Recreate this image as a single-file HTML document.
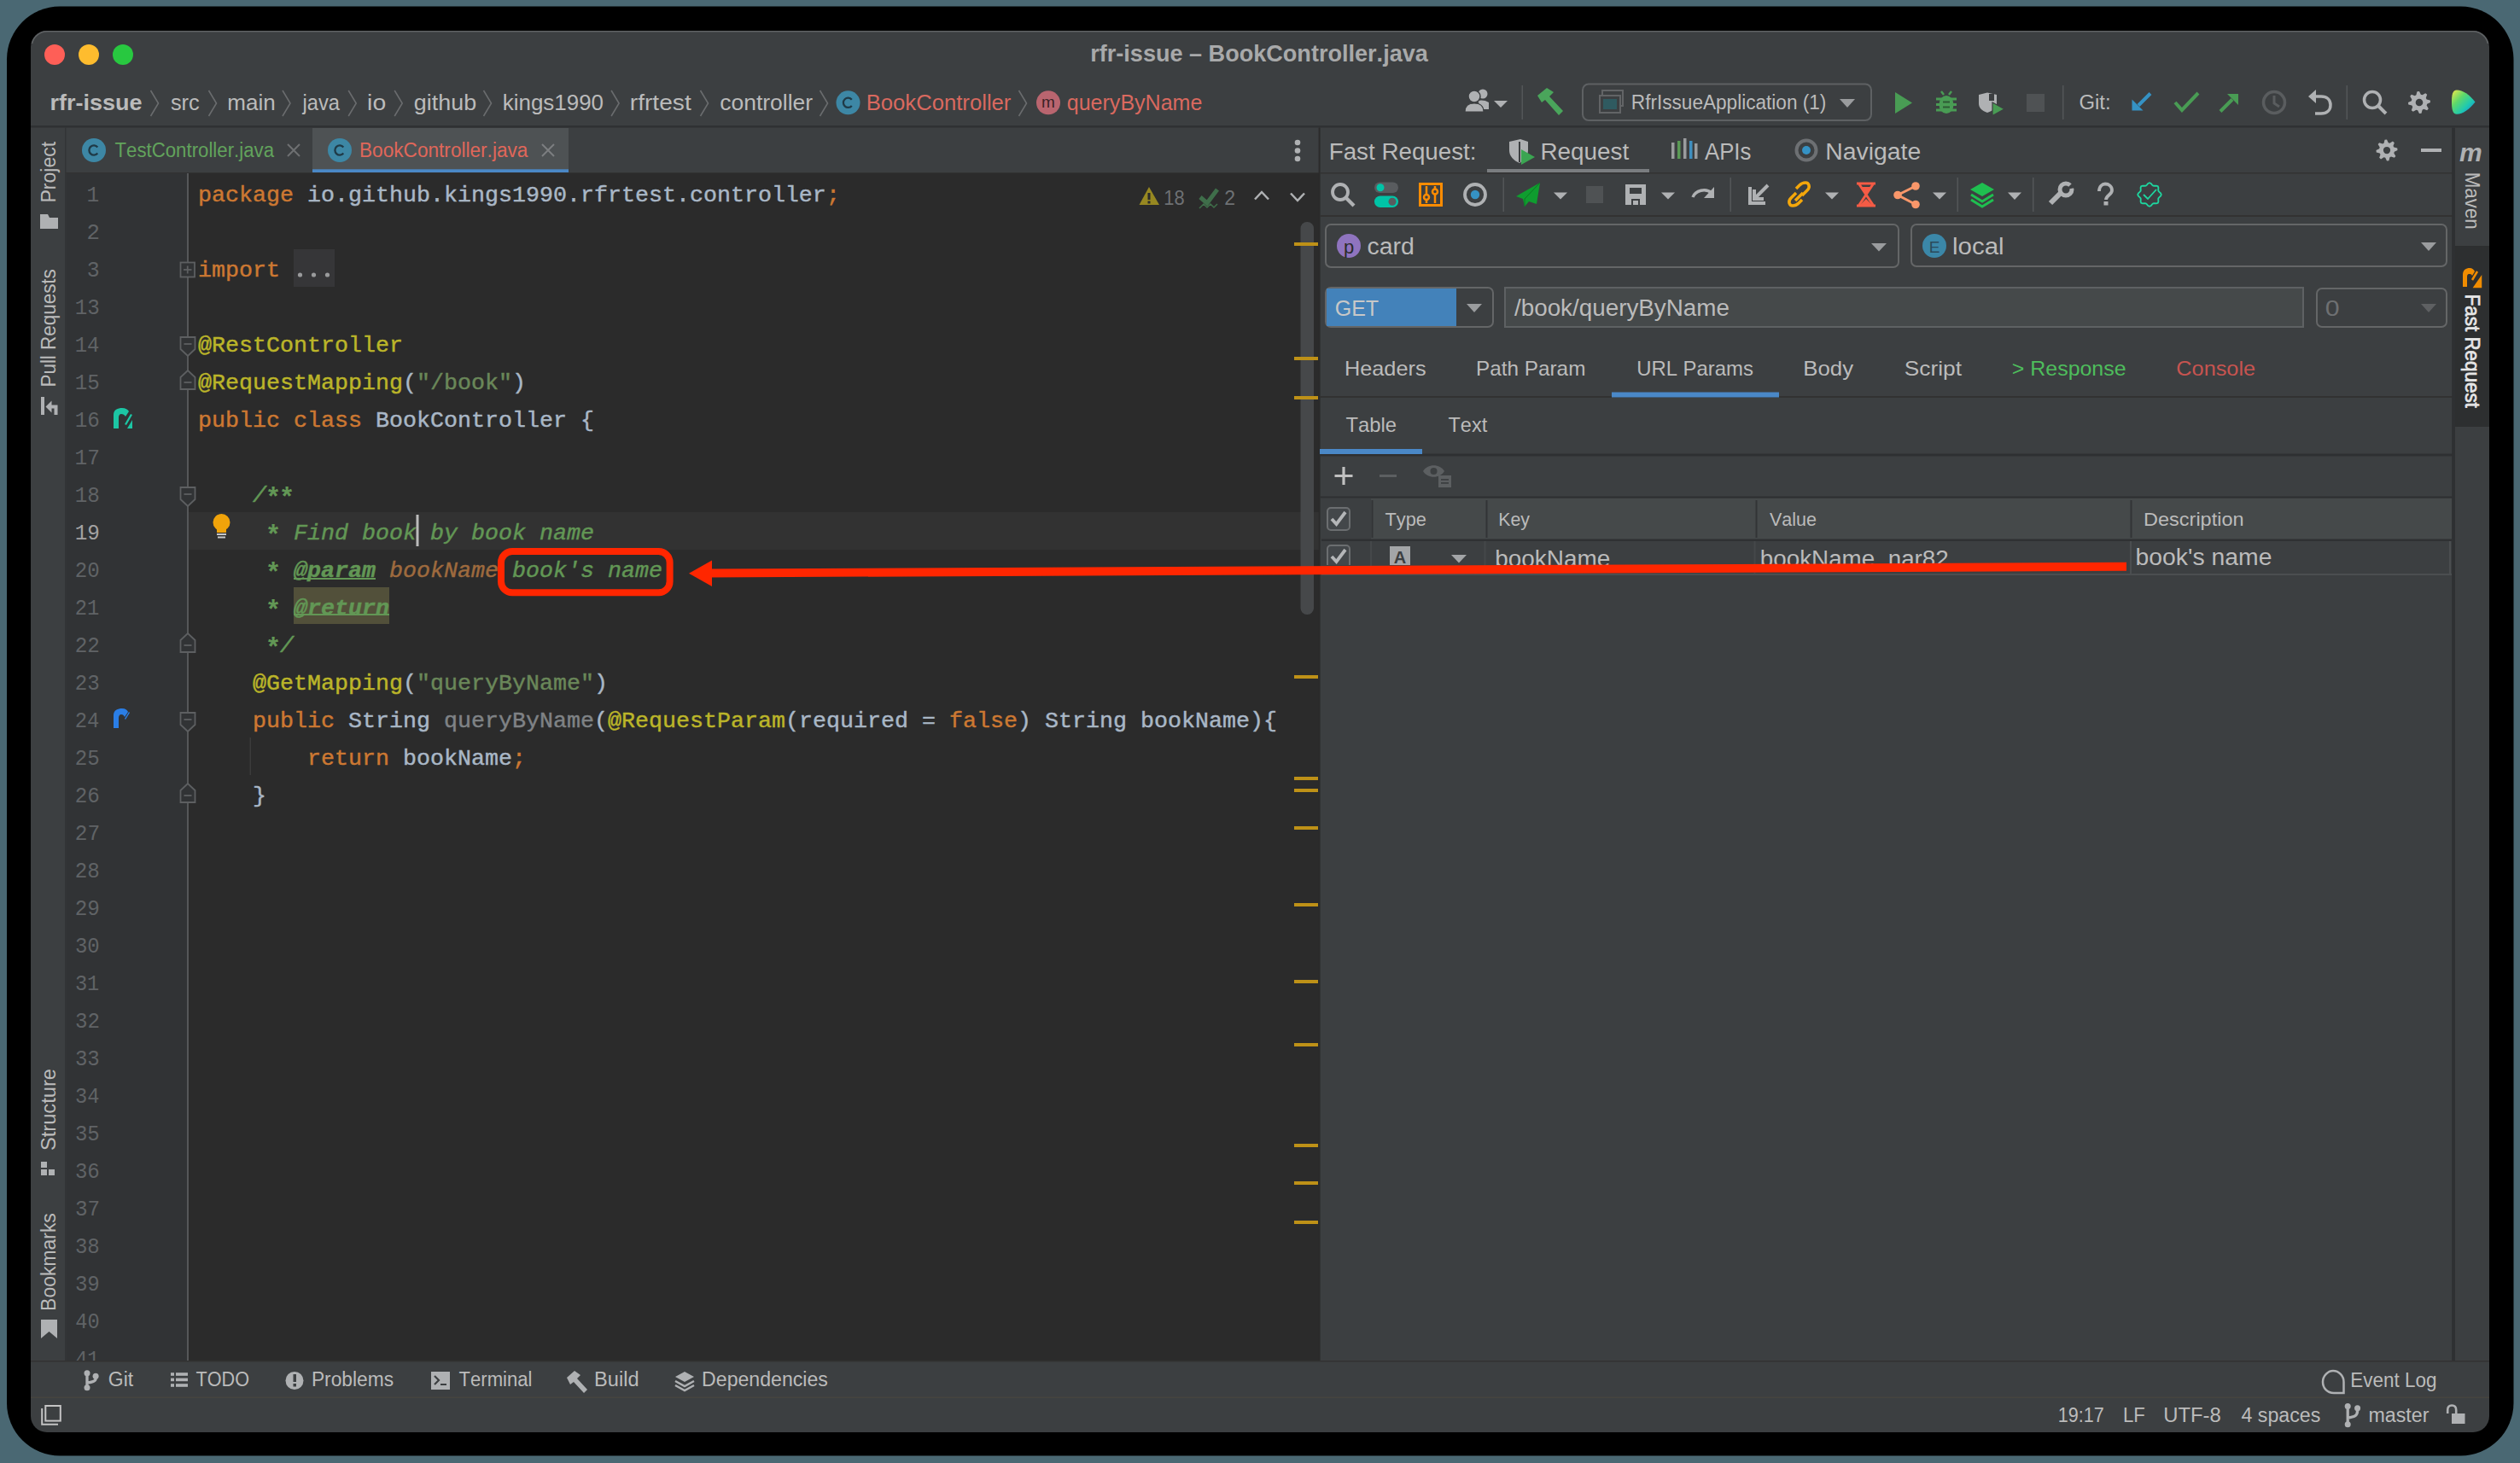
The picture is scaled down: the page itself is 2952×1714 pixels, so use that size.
<!DOCTYPE html>
<html><head><meta charset="utf-8"><title>rfr-issue – BookController.java</title>
<style>html,body{margin:0;padding:0;background:#4a6873;overflow:hidden} svg{display:block} text{font-kerning:none}</style>
</head><body>
<svg width="2952" height="1714" viewBox="0 0 2952 1714"><rect x="0" y="0" width="2952" height="1714" fill="#4a6873" />
<rect x="8" y="7.5" width="2936.5" height="1698" fill="#000000" rx="62" />
<rect x="36" y="36" width="2880" height="1642" fill="#3c3f41" rx="19" />
<path d="M 37.5 51 A 18.2 18.2 0 0 1 55 36.8 L 2897 36.8 A 18.2 18.2 0 0 1 2914.5 51" fill="none" stroke="#5f6264" stroke-width="1.6" />
<circle cx="64" cy="64" r="12" fill="#fe5f57" />
<circle cx="104" cy="64" r="12" fill="#febc2e" />
<circle cx="144" cy="64" r="12" fill="#28c840" />
<text x="1277.22" y="72.4" font-family="&quot;Liberation Sans&quot;, sans-serif" font-size="27" font-weight="bold" fill="#a8a9aa" textLength="395.61" lengthAdjust="spacingAndGlyphs" >rfr-issue – BookController.java</text>
<text x="58.52" y="128.6" font-family="&quot;Liberation Sans&quot;, sans-serif" font-size="26" font-weight="bold" fill="#bbbbbb" textLength="108.10" lengthAdjust="spacingAndGlyphs" >rfr-issue</text>
<text x="199.89" y="128.6" font-family="&quot;Liberation Sans&quot;, sans-serif" font-size="26" font-weight="normal" fill="#bbbbbb" textLength="33.77" lengthAdjust="spacingAndGlyphs" >src</text>
<text x="266.27" y="128.6" font-family="&quot;Liberation Sans&quot;, sans-serif" font-size="26" font-weight="normal" fill="#bbbbbb" textLength="56.42" lengthAdjust="spacingAndGlyphs" >main</text>
<text x="354.58" y="128.6" font-family="&quot;Liberation Sans&quot;, sans-serif" font-size="26" font-weight="normal" fill="#bbbbbb" textLength="43.42" lengthAdjust="spacingAndGlyphs" >java</text>
<text x="430.10" y="128.6" font-family="&quot;Liberation Sans&quot;, sans-serif" font-size="26" font-weight="normal" fill="#bbbbbb" textLength="22.09" lengthAdjust="spacingAndGlyphs" >io</text>
<text x="484.87" y="128.6" font-family="&quot;Liberation Sans&quot;, sans-serif" font-size="26" font-weight="normal" fill="#bbbbbb" textLength="73.26" lengthAdjust="spacingAndGlyphs" >github</text>
<text x="588.75" y="128.6" font-family="&quot;Liberation Sans&quot;, sans-serif" font-size="26" font-weight="normal" fill="#bbbbbb" textLength="118.26" lengthAdjust="spacingAndGlyphs" >kings1990</text>
<text x="737.83" y="128.6" font-family="&quot;Liberation Sans&quot;, sans-serif" font-size="26" font-weight="normal" fill="#bbbbbb" textLength="71.87" lengthAdjust="spacingAndGlyphs" >rfrtest</text>
<text x="843.28" y="128.6" font-family="&quot;Liberation Sans&quot;, sans-serif" font-size="26" font-weight="normal" fill="#bbbbbb" textLength="108.86" lengthAdjust="spacingAndGlyphs" >controller</text>
<text x="1014.69" y="128.6" font-family="&quot;Liberation Sans&quot;, sans-serif" font-size="26" font-weight="normal" fill="#d9695f" textLength="169.73" lengthAdjust="spacingAndGlyphs" >BookController</text>
<text x="1249.75" y="128.6" font-family="&quot;Liberation Sans&quot;, sans-serif" font-size="26" font-weight="normal" fill="#d9695f" textLength="158.66" lengthAdjust="spacingAndGlyphs" >queryByName</text>
<path d="M 176.5 106 L 185.5 121 L 176.5 136" fill="none" stroke="#6a6c6e" stroke-width="1.6" />
<path d="M 244.5 106 L 253.5 121 L 244.5 136" fill="none" stroke="#6a6c6e" stroke-width="1.6" />
<path d="M 331.0 106 L 340.0 121 L 331.0 136" fill="none" stroke="#6a6c6e" stroke-width="1.6" />
<path d="M 408.2 106 L 417.2 121 L 408.2 136" fill="none" stroke="#6a6c6e" stroke-width="1.6" />
<path d="M 462.2 106 L 471.2 121 L 462.2 136" fill="none" stroke="#6a6c6e" stroke-width="1.6" />
<path d="M 566.5 106 L 575.5 121 L 566.5 136" fill="none" stroke="#6a6c6e" stroke-width="1.6" />
<path d="M 716.1 106 L 725.1 121 L 716.1 136" fill="none" stroke="#6a6c6e" stroke-width="1.6" />
<path d="M 820.5 106 L 829.5 121 L 820.5 136" fill="none" stroke="#6a6c6e" stroke-width="1.6" />
<path d="M 960.5 106 L 969.5 121 L 960.5 136" fill="none" stroke="#6a6c6e" stroke-width="1.6" />
<path d="M 1193.5 106 L 1202.5 121 L 1193.5 136" fill="none" stroke="#6a6c6e" stroke-width="1.6" />
<circle cx="993.5" cy="120.3" r="14" fill="#3d87a5" />
<path d="M 997.79 116.70 A 5.6 5.6 0 1 0 997.79 123.90" fill="none" stroke="#1f3a47" stroke-width="2.3" />
<circle cx="1228" cy="120.3" r="14" fill="#b9656f" />
<text x="1228" y="126" font-family="&quot;Liberation Sans&quot;, sans-serif" font-size="19" font-weight="normal" font-style="normal" fill="#3b2226" xml:space="preserve" text-anchor="middle">m</text>
<rect x="36" y="147" width="2880" height="2.5" fill="#2f3133" />
<circle cx="1737" cy="110" r="5.5" fill="#afb1b3" />
<path d="M 1731 118 C 1734 117 1740 117 1744 120 L 1744 128 L 1736 128 Z" fill="#afb1b3" />
<circle cx="1727" cy="113" r="7" fill="#afb1b3" stroke="#3c3f41" stroke-width="1.5"/>
<path d="M 1716 131 C 1716 124 1720 121 1727 121 C 1734 121 1738 124 1738 131 Z" fill="#afb1b3" stroke="#3c3f41" stroke-width="1.2"/>
<path d="M 1750 118 L 1766 118 L 1758 126 Z" fill="#afb1b3" />
<rect x="1782.5" y="100" width="1.5" height="40" fill="#535658" />
<path d="M 1801 112 L 1812 103 L 1820 108 L 1815 113 L 1831 130 L 1826 135 L 1810 117 L 1806 120 Z" fill="#4aa55b" />
<rect x="1854" y="98.5" width="338" height="42.5" fill="none" rx="7" stroke="#5e6163" stroke-width="2"/>
<rect x="1877" y="106" width="24" height="18" fill="none" stroke="#626466" stroke-width="2"/>
<rect x="1874" y="112" width="24" height="20" fill="#3c3f41" stroke="#626466" stroke-width="2"/>
<rect x="1878" y="116" width="16" height="12" fill="#2f5a60" />
<text x="1910.85" y="127.7" font-family="&quot;Liberation Sans&quot;, sans-serif" font-size="23" font-weight="normal" fill="#bbbbbb" textLength="228.55" lengthAdjust="spacingAndGlyphs" >RfrIssueApplication (1)</text>
<path d="M 2155 116 L 2173 116 L 2164 126 Z" fill="#9a9c9e" />
<path d="M 2220 108 L 2240 120.5 L 2220 133 Z" fill="#499c54" />
<ellipse cx="2280" cy="122.5" rx="8.5" ry="10.5" fill="#499c54"/>
<path d="M 2274 107 L 2277 111 M 2286 107 L 2283 111" fill="none" stroke="#499c54" stroke-width="2.4" />
<line x1="2268" y1="116" x2="2292" y2="116" stroke="#499c54" stroke-width="3" />
<line x1="2268" y1="122.5" x2="2292" y2="122.5" stroke="#499c54" stroke-width="3" />
<line x1="2268" y1="129" x2="2292" y2="129" stroke="#499c54" stroke-width="3" />
<rect x="2276" y="118.5" width="8" height="2" fill="#2e5a35" />
<rect x="2276" y="124.5" width="8" height="2" fill="#2e5a35" />
<path d="M 2318 111 L 2328 108.5 L 2339 111 L 2339 121 C 2339 126 2335 129.5 2328 132 C 2321 129.5 2318 126 2318 121 Z" fill="#afb1b3" />
<path d="M 2330 110 L 2336 110 L 2336 118 L 2330 118 Z" fill="#3c3f41" />
<path d="M 2334 120 L 2348 127.7 L 2334 135.5 Z" fill="#499c54" stroke="#3c3f41" stroke-width="1.2"/>
<rect x="2374" y="110" width="21" height="21" fill="#4f5254" />
<rect x="2416" y="100" width="1.5" height="40" fill="#535658" />
<text x="2435.50" y="128" font-family="&quot;Liberation Sans&quot;, sans-serif" font-size="23" font-weight="normal" fill="#bbbbbb" textLength="37.07" lengthAdjust="spacingAndGlyphs" >Git:</text>
<path d="M 2519 109.5 L 2505 123.5" fill="none" stroke="#3592c4" stroke-width="4" />
<path d="M 2497.5 129.5 L 2497.5 116.5 L 2510.5 129.5 Z" fill="#3592c4" />
<path d="M 2548 120 L 2556 129 L 2575 109" fill="none" stroke="#499c54" stroke-width="4" />
<path d="M 2601 130.5 L 2615 116.5" fill="none" stroke="#499c54" stroke-width="4" />
<path d="M 2622 110 L 2622 123 L 2609 110 Z" fill="#499c54" />
<circle cx="2664" cy="120" r="12.5" fill="none" stroke="#5a5d5f" stroke-width="3.5"/>
<path d="M 2664 112 L 2664 121 L 2670 125" fill="none" stroke="#5a5d5f" stroke-width="3" />
<path d="M 2710 113 L 2719 113 C 2726 113 2730 117 2730 123 C 2730 129 2726 133 2719 133 L 2712 133" fill="none" stroke="#afb1b3" stroke-width="3.5" />
<path d="M 2704 113 L 2713 105 L 2713 121 Z" fill="#afb1b3" />
<rect x="2748.5" y="100" width="1.5" height="40" fill="#535658" />
<circle cx="2779" cy="117" r="9.5" fill="none" stroke="#afb1b3" stroke-width="3.5"/>
<line x1="2786" y1="124" x2="2795" y2="133" stroke="#afb1b3" stroke-width="4" />
<path d="M 2846.75 117.46 L 2847.00 120.00 L 2843.18 121.83 L 2842.65 123.58 L 2844.81 127.22 L 2843.19 129.19 L 2839.20 127.78 L 2837.58 128.65 L 2836.54 132.75 L 2834.00 133.00 L 2832.17 129.18 L 2830.42 128.65 L 2826.78 130.81 L 2824.81 129.19 L 2826.22 125.20 L 2825.35 123.58 L 2821.25 122.54 L 2821.00 120.00 L 2824.82 118.17 L 2825.35 116.42 L 2823.19 112.78 L 2824.81 110.81 L 2828.80 112.22 L 2830.42 111.35 L 2831.46 107.25 L 2834.00 107.00 L 2835.83 110.82 L 2837.58 111.35 L 2841.22 109.19 L 2843.19 110.81 L 2841.78 114.80 L 2842.65 116.42 Z" fill="#afb1b3" />
<circle cx="2834" cy="120" r="4.29" fill="#3c3f41" />
<defs><linearGradient id="jbg" x1="0" y1="0" x2="1" y2="1"><stop offset="0" stop-color="#f4e84a"/><stop offset="0.35" stop-color="#5fd86a"/><stop offset="0.65" stop-color="#1fc9b0"/><stop offset="1" stop-color="#1778e6"/></linearGradient></defs>
<path d="M 2878 105.5 C 2885 105.5 2893 111 2899.5 119.5 C 2893 128 2885 133.8 2878 133.8 C 2873 133.8 2872 128 2872 119.5 C 2872 111 2873 105.5 2878 105.5 Z" fill="url(#jbg)" />
<rect x="76" y="149.5" width="1.5" height="1445" fill="#323436" />
<text transform="rotate(-90)" x="-237.59" y="64.5" font-family="&quot;Liberation Sans&quot;, sans-serif" font-size="23" fill="#bbbbbb" textLength="71.76" lengthAdjust="spacingAndGlyphs">Project</text>
<path d="M 47 251 L 56 251 L 58 255 L 68 255 L 68 268 L 47 268 Z" fill="#afb1b3" />
<text transform="rotate(-90)" x="-453.54" y="64.5" font-family="&quot;Liberation Sans&quot;, sans-serif" font-size="23" fill="#bbbbbb" textLength="138.35" lengthAdjust="spacingAndGlyphs">Pull Requests</text>
<rect x="48" y="465" width="4" height="21" fill="#afb1b3" />
<path d="M 65.5 486 L 65.5 476.5 L 58 476.5" fill="none" stroke="#afb1b3" stroke-width="4" />
<path d="M 53.5 476.5 L 60.5 469.5 L 60.5 483.5 Z" fill="#afb1b3" />
<text transform="rotate(-90)" x="-1348.08" y="64.5" font-family="&quot;Liberation Sans&quot;, sans-serif" font-size="23" fill="#bbbbbb" textLength="96.13" lengthAdjust="spacingAndGlyphs">Structure</text>
<rect x="48" y="1361" width="7" height="7" fill="#afb1b3" />
<rect x="57" y="1370" width="7" height="7" fill="#afb1b3" />
<rect x="48" y="1370" width="7" height="7" fill="#afb1b3" />
<text transform="rotate(-90)" x="-1535.88" y="64.5" font-family="&quot;Liberation Sans&quot;, sans-serif" font-size="23" fill="#bbbbbb" textLength="114.71" lengthAdjust="spacingAndGlyphs">Bookmarks</text>
<path d="M 48 1546 L 67 1546 L 67 1568 L 57.5 1560 L 48 1568 Z" fill="#afb1b3" />
<rect x="366" y="150" width="300" height="53" fill="#4e5254" />
<rect x="366" y="198.3" width="300" height="5.2" fill="#4a88c7" />
<circle cx="110" cy="176" r="14" fill="#3d87a5" />
<path d="M 114.29 172.40 A 5.6 5.6 0 1 0 114.29 179.60" fill="none" stroke="#1f3a47" stroke-width="2.3" />
<text x="134.50" y="184" font-family="&quot;Liberation Sans&quot;, sans-serif" font-size="23" font-weight="normal" fill="#62a35c" textLength="186.50" lengthAdjust="spacingAndGlyphs" >TestController.java</text>
<path d="M 337 169 L 351 183 M 351 169 L 337 183" fill="none" stroke="#6e7072" stroke-width="2" />
<circle cx="398" cy="176" r="14" fill="#3d87a5" />
<path d="M 402.29 172.40 A 5.6 5.6 0 1 0 402.29 179.60" fill="none" stroke="#1f3a47" stroke-width="2.3" />
<text x="421.04" y="184" font-family="&quot;Liberation Sans&quot;, sans-serif" font-size="23" font-weight="normal" fill="#e0675a" textLength="197.36" lengthAdjust="spacingAndGlyphs" >BookController.java</text>
<path d="M 635 169 L 649 183 M 649 169 L 635 183" fill="none" stroke="#7c7e80" stroke-width="2" />
<circle cx="1520" cy="167" r="3.3" fill="#afb1b3" />
<circle cx="1520" cy="176.5" r="3.3" fill="#afb1b3" />
<circle cx="1520" cy="186" r="3.3" fill="#afb1b3" />
<rect x="77" y="202" width="1468" height="1" fill="#323232" />
<rect x="77.5" y="203" width="142" height="1391" fill="#313335" />
<rect x="221" y="203" width="1324" height="1391" fill="#2b2b2b" />
<rect x="221" y="600" width="1324" height="44" fill="#323232" />
<rect x="344" y="688" width="112" height="43" fill="#52503a" />
<rect x="219" y="203" width="2" height="1391" fill="#555759" />
<clipPath id="edclip"><rect x="77" y="203" width="1468" height="1391"/></clipPath><g clip-path="url(#edclip)">
<text x="101.62" y="236" font-family="&quot;Liberation Mono&quot;, monospace" font-size="26.667" font-weight="normal" fill="#606366" textLength="14.77" lengthAdjust="spacingAndGlyphs" >1</text>
<text x="101.59" y="280" font-family="&quot;Liberation Mono&quot;, monospace" font-size="26.667" font-weight="normal" fill="#606366" textLength="15.43" lengthAdjust="spacingAndGlyphs" >2</text>
<text x="101.84" y="324" font-family="&quot;Liberation Mono&quot;, monospace" font-size="26.667" font-weight="normal" fill="#606366" textLength="14.94" lengthAdjust="spacingAndGlyphs" >3</text>
<text x="87.65" y="368" font-family="&quot;Liberation Mono&quot;, monospace" font-size="26.667" font-weight="normal" fill="#606366" textLength="29.09" lengthAdjust="spacingAndGlyphs" >13</text>
<text x="87.67" y="412" font-family="&quot;Liberation Mono&quot;, monospace" font-size="26.667" font-weight="normal" fill="#606366" textLength="28.75" lengthAdjust="spacingAndGlyphs" >14</text>
<text x="87.65" y="456" font-family="&quot;Liberation Mono&quot;, monospace" font-size="26.667" font-weight="normal" fill="#606366" textLength="29.09" lengthAdjust="spacingAndGlyphs" >15</text>
<text x="87.65" y="500" font-family="&quot;Liberation Mono&quot;, monospace" font-size="26.667" font-weight="normal" fill="#606366" textLength="29.13" lengthAdjust="spacingAndGlyphs" >16</text>
<text x="87.62" y="544" font-family="&quot;Liberation Mono&quot;, monospace" font-size="26.667" font-weight="normal" fill="#606366" textLength="29.50" lengthAdjust="spacingAndGlyphs" >17</text>
<text x="87.64" y="588" font-family="&quot;Liberation Mono&quot;, monospace" font-size="26.667" font-weight="normal" fill="#606366" textLength="29.16" lengthAdjust="spacingAndGlyphs" >18</text>
<text x="87.64" y="632" font-family="&quot;Liberation Mono&quot;, monospace" font-size="26.667" font-weight="normal" fill="#a4a3a3" textLength="29.25" lengthAdjust="spacingAndGlyphs" >19</text>
<text x="87.70" y="676" font-family="&quot;Liberation Mono&quot;, monospace" font-size="26.667" font-weight="normal" fill="#606366" textLength="28.98" lengthAdjust="spacingAndGlyphs" >20</text>
<text x="87.72" y="720" font-family="&quot;Liberation Mono&quot;, monospace" font-size="26.667" font-weight="normal" fill="#606366" textLength="28.63" lengthAdjust="spacingAndGlyphs" >21</text>
<text x="87.69" y="764" font-family="&quot;Liberation Mono&quot;, monospace" font-size="26.667" font-weight="normal" fill="#606366" textLength="29.24" lengthAdjust="spacingAndGlyphs" >22</text>
<text x="87.70" y="808" font-family="&quot;Liberation Mono&quot;, monospace" font-size="26.667" font-weight="normal" fill="#606366" textLength="29.04" lengthAdjust="spacingAndGlyphs" >23</text>
<text x="87.72" y="852" font-family="&quot;Liberation Mono&quot;, monospace" font-size="26.667" font-weight="normal" fill="#606366" textLength="28.70" lengthAdjust="spacingAndGlyphs" >24</text>
<text x="87.70" y="896" font-family="&quot;Liberation Mono&quot;, monospace" font-size="26.667" font-weight="normal" fill="#606366" textLength="29.04" lengthAdjust="spacingAndGlyphs" >25</text>
<text x="87.70" y="940" font-family="&quot;Liberation Mono&quot;, monospace" font-size="26.667" font-weight="normal" fill="#606366" textLength="29.08" lengthAdjust="spacingAndGlyphs" >26</text>
<text x="87.68" y="984" font-family="&quot;Liberation Mono&quot;, monospace" font-size="26.667" font-weight="normal" fill="#606366" textLength="29.44" lengthAdjust="spacingAndGlyphs" >27</text>
<text x="87.69" y="1028" font-family="&quot;Liberation Mono&quot;, monospace" font-size="26.667" font-weight="normal" fill="#606366" textLength="29.10" lengthAdjust="spacingAndGlyphs" >28</text>
<text x="87.69" y="1072" font-family="&quot;Liberation Mono&quot;, monospace" font-size="26.667" font-weight="normal" fill="#606366" textLength="29.20" lengthAdjust="spacingAndGlyphs" >29</text>
<text x="87.90" y="1116" font-family="&quot;Liberation Mono&quot;, monospace" font-size="26.667" font-weight="normal" fill="#606366" textLength="28.77" lengthAdjust="spacingAndGlyphs" >30</text>
<text x="87.92" y="1160" font-family="&quot;Liberation Mono&quot;, monospace" font-size="26.667" font-weight="normal" fill="#606366" textLength="28.43" lengthAdjust="spacingAndGlyphs" >31</text>
<text x="87.89" y="1204" font-family="&quot;Liberation Mono&quot;, monospace" font-size="26.667" font-weight="normal" fill="#606366" textLength="29.02" lengthAdjust="spacingAndGlyphs" >32</text>
<text x="87.90" y="1248" font-family="&quot;Liberation Mono&quot;, monospace" font-size="26.667" font-weight="normal" fill="#606366" textLength="28.83" lengthAdjust="spacingAndGlyphs" >33</text>
<text x="87.92" y="1292" font-family="&quot;Liberation Mono&quot;, monospace" font-size="26.667" font-weight="normal" fill="#606366" textLength="28.49" lengthAdjust="spacingAndGlyphs" >34</text>
<text x="87.90" y="1336" font-family="&quot;Liberation Mono&quot;, monospace" font-size="26.667" font-weight="normal" fill="#606366" textLength="28.83" lengthAdjust="spacingAndGlyphs" >35</text>
<text x="87.90" y="1380" font-family="&quot;Liberation Mono&quot;, monospace" font-size="26.667" font-weight="normal" fill="#606366" textLength="28.86" lengthAdjust="spacingAndGlyphs" >36</text>
<text x="87.88" y="1424" font-family="&quot;Liberation Mono&quot;, monospace" font-size="26.667" font-weight="normal" fill="#606366" textLength="29.22" lengthAdjust="spacingAndGlyphs" >37</text>
<text x="87.90" y="1468" font-family="&quot;Liberation Mono&quot;, monospace" font-size="26.667" font-weight="normal" fill="#606366" textLength="28.89" lengthAdjust="spacingAndGlyphs" >38</text>
<text x="87.89" y="1512" font-family="&quot;Liberation Mono&quot;, monospace" font-size="26.667" font-weight="normal" fill="#606366" textLength="28.98" lengthAdjust="spacingAndGlyphs" >39</text>
<text x="88.21" y="1556" font-family="&quot;Liberation Mono&quot;, monospace" font-size="26.667" font-weight="normal" fill="#606366" textLength="28.45" lengthAdjust="spacingAndGlyphs" >40</text>
<text x="88.22" y="1600" font-family="&quot;Liberation Mono&quot;, monospace" font-size="26.667" font-weight="normal" fill="#606366" textLength="28.11" lengthAdjust="spacingAndGlyphs" >41</text>
<text x="232" y="236" font-family="&quot;Liberation Mono&quot;, monospace" font-size="26.667" font-style="normal" font-weight="normal" fill="#cc7832" stroke="#cc7832" stroke-width="0.45" xml:space="preserve" >package</text>
<text x="360" y="236" font-family="&quot;Liberation Mono&quot;, monospace" font-size="26.667" font-style="normal" font-weight="normal" fill="#a9b7c6" stroke="#a9b7c6" stroke-width="0.45" xml:space="preserve" >io.github.kings1990.rfrtest.controller</text>
<text x="968" y="236" font-family="&quot;Liberation Mono&quot;, monospace" font-size="26.667" font-style="normal" font-weight="normal" fill="#cc7832" stroke="#cc7832" stroke-width="0.45" xml:space="preserve" >;</text>
<text x="232" y="324" font-family="&quot;Liberation Mono&quot;, monospace" font-size="26.667" font-style="normal" font-weight="normal" fill="#cc7832" stroke="#cc7832" stroke-width="0.45" xml:space="preserve" >import</text>
<rect x="344" y="292" width="48" height="44" fill="#363638" />
<circle cx="351.5" cy="322" r="2.6" fill="#9a9b9c" />
<circle cx="367.5" cy="322" r="2.6" fill="#9a9b9c" />
<circle cx="383.5" cy="322" r="2.6" fill="#9a9b9c" />
<text x="232" y="412" font-family="&quot;Liberation Mono&quot;, monospace" font-size="26.667" font-style="normal" font-weight="normal" fill="#bbb529" stroke="#bbb529" stroke-width="0.45" xml:space="preserve" >@RestController</text>
<text x="232" y="456" font-family="&quot;Liberation Mono&quot;, monospace" font-size="26.667" font-style="normal" font-weight="normal" fill="#bbb529" stroke="#bbb529" stroke-width="0.45" xml:space="preserve" >@RequestMapping</text>
<text x="472" y="456" font-family="&quot;Liberation Mono&quot;, monospace" font-size="26.667" font-style="normal" font-weight="normal" fill="#a9b7c6" stroke="#a9b7c6" stroke-width="0.45" xml:space="preserve" >(</text>
<text x="488" y="456" font-family="&quot;Liberation Mono&quot;, monospace" font-size="26.667" font-style="normal" font-weight="normal" fill="#6a8759" stroke="#6a8759" stroke-width="0.45" xml:space="preserve" >"/book"</text>
<text x="600" y="456" font-family="&quot;Liberation Mono&quot;, monospace" font-size="26.667" font-style="normal" font-weight="normal" fill="#a9b7c6" stroke="#a9b7c6" stroke-width="0.45" xml:space="preserve" >)</text>
<text x="232" y="500" font-family="&quot;Liberation Mono&quot;, monospace" font-size="26.667" font-style="normal" font-weight="normal" fill="#cc7832" stroke="#cc7832" stroke-width="0.45" xml:space="preserve" >public</text>
<text x="344" y="500" font-family="&quot;Liberation Mono&quot;, monospace" font-size="26.667" font-style="normal" font-weight="normal" fill="#cc7832" stroke="#cc7832" stroke-width="0.45" xml:space="preserve" >class</text>
<text x="440" y="500" font-family="&quot;Liberation Mono&quot;, monospace" font-size="26.667" font-style="normal" font-weight="normal" fill="#a9b7c6" stroke="#a9b7c6" stroke-width="0.45" xml:space="preserve" >BookController {</text>
<text x="296" y="588" font-family="&quot;Liberation Mono&quot;, monospace" font-size="26.667" font-style="italic" font-weight="normal" fill="#629755" stroke="#629755" stroke-width="0.45" xml:space="preserve" >/</text>
<text x="320" y="593" font-family="&quot;Liberation Mono&quot;, monospace" font-size="31" font-weight="bold" fill="#629755" text-anchor="middle">*</text>
<text x="336" y="593" font-family="&quot;Liberation Mono&quot;, monospace" font-size="31" font-weight="bold" fill="#629755" text-anchor="middle">*</text>
<text x="344" y="632" font-family="&quot;Liberation Mono&quot;, monospace" font-size="26.667" font-style="italic" font-weight="normal" fill="#629755" stroke="#629755" stroke-width="0.45" xml:space="preserve" >Find book by book name</text>
<text x="344" y="676" font-family="&quot;Liberation Mono&quot;, monospace" font-size="26.667" font-style="italic" font-weight="bold" fill="#629755" stroke="#629755" stroke-width="0.45" xml:space="preserve" >@param</text>
<text x="456" y="676" font-family="&quot;Liberation Mono&quot;, monospace" font-size="26.667" font-style="italic" font-weight="normal" fill="#9e6a3e" stroke="#9e6a3e" stroke-width="0.45" xml:space="preserve" >bookName</text>
<text x="600" y="676" font-family="&quot;Liberation Mono&quot;, monospace" font-size="26.667" font-style="italic" font-weight="normal" fill="#629755" stroke="#629755" stroke-width="0.45" xml:space="preserve" >book's name</text>
<rect x="344" y="677" width="96" height="2" fill="#629755" />
<text x="344" y="720" font-family="&quot;Liberation Mono&quot;, monospace" font-size="26.667" font-style="italic" font-weight="bold" fill="#629755" stroke="#629755" stroke-width="0.45" xml:space="preserve" >@return</text>
<rect x="344" y="719" width="112" height="2" fill="#629755" />
<text x="320" y="637" font-family="&quot;Liberation Mono&quot;, monospace" font-size="31" font-weight="bold" fill="#629755" text-anchor="middle">*</text>
<text x="320" y="681" font-family="&quot;Liberation Mono&quot;, monospace" font-size="31" font-weight="bold" fill="#629755" text-anchor="middle">*</text>
<text x="320" y="725" font-family="&quot;Liberation Mono&quot;, monospace" font-size="31" font-weight="bold" fill="#629755" text-anchor="middle">*</text>
<text x="320" y="769" font-family="&quot;Liberation Mono&quot;, monospace" font-size="31" font-weight="bold" fill="#629755" text-anchor="middle">*</text>
<text x="328" y="764" font-family="&quot;Liberation Mono&quot;, monospace" font-size="26.667" font-style="italic" font-weight="normal" fill="#629755" stroke="#629755" stroke-width="0.45" xml:space="preserve" >/</text>
<text x="296" y="808" font-family="&quot;Liberation Mono&quot;, monospace" font-size="26.667" font-style="normal" font-weight="normal" fill="#bbb529" stroke="#bbb529" stroke-width="0.45" xml:space="preserve" >@GetMapping</text>
<text x="472" y="808" font-family="&quot;Liberation Mono&quot;, monospace" font-size="26.667" font-style="normal" font-weight="normal" fill="#a9b7c6" stroke="#a9b7c6" stroke-width="0.45" xml:space="preserve" >(</text>
<text x="488" y="808" font-family="&quot;Liberation Mono&quot;, monospace" font-size="26.667" font-style="normal" font-weight="normal" fill="#6a8759" stroke="#6a8759" stroke-width="0.45" xml:space="preserve" >"queryByName"</text>
<text x="696" y="808" font-family="&quot;Liberation Mono&quot;, monospace" font-size="26.667" font-style="normal" font-weight="normal" fill="#a9b7c6" stroke="#a9b7c6" stroke-width="0.45" xml:space="preserve" >)</text>
<text x="296" y="852" font-family="&quot;Liberation Mono&quot;, monospace" font-size="26.667" font-style="normal" font-weight="normal" fill="#cc7832" stroke="#cc7832" stroke-width="0.45" xml:space="preserve" >public</text>
<text x="408" y="852" font-family="&quot;Liberation Mono&quot;, monospace" font-size="26.667" font-style="normal" font-weight="normal" fill="#a9b7c6" stroke="#a9b7c6" stroke-width="0.45" xml:space="preserve" >String</text>
<text x="520" y="852" font-family="&quot;Liberation Mono&quot;, monospace" font-size="26.667" font-style="normal" font-weight="normal" fill="#7f8285" stroke="#7f8285" stroke-width="0.45" xml:space="preserve" >queryByName</text>
<text x="696" y="852" font-family="&quot;Liberation Mono&quot;, monospace" font-size="26.667" font-style="normal" font-weight="normal" fill="#a9b7c6" stroke="#a9b7c6" stroke-width="0.45" xml:space="preserve" >(</text>
<text x="712" y="852" font-family="&quot;Liberation Mono&quot;, monospace" font-size="26.667" font-style="normal" font-weight="normal" fill="#bbb529" stroke="#bbb529" stroke-width="0.45" xml:space="preserve" >@RequestParam</text>
<text x="920" y="852" font-family="&quot;Liberation Mono&quot;, monospace" font-size="26.667" font-style="normal" font-weight="normal" fill="#a9b7c6" stroke="#a9b7c6" stroke-width="0.45" xml:space="preserve" >(required = </text>
<text x="1112" y="852" font-family="&quot;Liberation Mono&quot;, monospace" font-size="26.667" font-style="normal" font-weight="normal" fill="#cc7832" stroke="#cc7832" stroke-width="0.45" xml:space="preserve" >false</text>
<text x="1192" y="852" font-family="&quot;Liberation Mono&quot;, monospace" font-size="26.667" font-style="normal" font-weight="normal" fill="#a9b7c6" stroke="#a9b7c6" stroke-width="0.45" xml:space="preserve" >) String bookName){</text>
<text x="360" y="896" font-family="&quot;Liberation Mono&quot;, monospace" font-size="26.667" font-style="normal" font-weight="normal" fill="#cc7832" stroke="#cc7832" stroke-width="0.45" xml:space="preserve" >return</text>
<text x="472" y="896" font-family="&quot;Liberation Mono&quot;, monospace" font-size="26.667" font-style="normal" font-weight="normal" fill="#a9b7c6" stroke="#a9b7c6" stroke-width="0.45" xml:space="preserve" >bookName</text>
<text x="600" y="896" font-family="&quot;Liberation Mono&quot;, monospace" font-size="26.667" font-style="normal" font-weight="normal" fill="#cc7832" stroke="#cc7832" stroke-width="0.45" xml:space="preserve" >;</text>
<text x="296" y="940" font-family="&quot;Liberation Mono&quot;, monospace" font-size="26.667" font-style="normal" font-weight="normal" fill="#a9b7c6" stroke="#a9b7c6" stroke-width="0.45" xml:space="preserve" >}</text>
<rect x="487.5" y="603" width="3" height="37" fill="#bbbbbb" />
<rect x="292.5" y="864" width="1.5" height="44" fill="#3b3b3b" />
</g>
<rect x="211.5" y="307.5" width="16.5" height="17" fill="#313335" stroke="#5d5f61" stroke-width="1.8"/>
<line x1="215" y1="316" x2="224.5" y2="316" stroke="#5d5f61" stroke-width="1.8" />
<line x1="219.75" y1="311.5" x2="219.75" y2="320.5" stroke="#5d5f61" stroke-width="1.8" />
<path d="M 211.5 395 L 228.5 395 L 228.5 409 L 220 417 L 211.5 409 Z" fill="#313335" stroke="#5d5f61" stroke-width="1.8" />
<line x1="215.5" y1="403" x2="224.5" y2="403" stroke="#5d5f61" stroke-width="1.8" />
<path d="M 211.5 456 L 228.5 456 L 228.5 442 L 220 434 L 211.5 442 Z" fill="#313335" stroke="#5d5f61" stroke-width="1.8" />
<line x1="215.5" y1="448" x2="224.5" y2="448" stroke="#5d5f61" stroke-width="1.8" />
<path d="M 211.5 571 L 228.5 571 L 228.5 585 L 220 593 L 211.5 585 Z" fill="#313335" stroke="#5d5f61" stroke-width="1.8" />
<line x1="215.5" y1="579" x2="224.5" y2="579" stroke="#5d5f61" stroke-width="1.8" />
<path d="M 211.5 764 L 228.5 764 L 228.5 750 L 220 742 L 211.5 750 Z" fill="#313335" stroke="#5d5f61" stroke-width="1.8" />
<line x1="215.5" y1="756" x2="224.5" y2="756" stroke="#5d5f61" stroke-width="1.8" />
<path d="M 211.5 835 L 228.5 835 L 228.5 849 L 220 857 L 211.5 849 Z" fill="#313335" stroke="#5d5f61" stroke-width="1.8" />
<line x1="215.5" y1="843" x2="224.5" y2="843" stroke="#5d5f61" stroke-width="1.8" />
<path d="M 211.5 940 L 228.5 940 L 228.5 926 L 220 918 L 211.5 926 Z" fill="#313335" stroke="#5d5f61" stroke-width="1.8" />
<line x1="215.5" y1="932" x2="224.5" y2="932" stroke="#5d5f61" stroke-width="1.8" />
<path d="M 133 502 L 133 486 C 133 480 138 478 143 478 C 147 478 150 480 151 482 L 147 488 C 146 486 144 485 142 485 C 140 485 139 487 139 489 L 139 502 Z" fill="#1cc6a4" />
<path d="M 146 497 L 153 485 L 155 486 L 148 498 Z M 149 502 L 155 492 L 155 502 Z" fill="#1cc6a4" />
<path d="M 133 853 L 133 838 C 133 832 138 830 143 830 C 147 830 149 832 150 834 L 146 840 C 145 838 144 837 142 837 C 140 837 139 839 139 841 L 139 853 Z" fill="#2a7ee6" />
<path d="M 146 842 L 151 834 L 152 835 L 147 843 Z" fill="#2a7ee6" />
<circle cx="259.5" cy="612" r="10" fill="#f0a30a" />
<rect x="254" y="617" width="11" height="7" fill="#f0a30a" />
<rect x="254" y="625" width="11" height="2" fill="#c8c8c8" />
<rect x="255" y="628.5" width="9" height="2" fill="#c8c8c8" />
<path d="M 1346 219 L 1358 240 L 1334.5 240 Z" fill="#978821" />
<rect x="1344.5" y="226" width="3" height="8" fill="#2b2b2b" />
<rect x="1344.5" y="235.5" width="3" height="3" fill="#2b2b2b" />
<text x="1363.33" y="240" font-family="&quot;Liberation Sans&quot;, sans-serif" font-size="24" font-weight="normal" fill="#6e7174" textLength="24.32" lengthAdjust="spacingAndGlyphs" >18</text>
<path d="M 1406 231 L 1414 238 L 1426 222" fill="none" stroke="#3f6e4a" stroke-width="5" />
<path d="M 1405 244 L 1410 239 L 1414 243 L 1418 239 L 1422 243 L 1426 239" fill="none" stroke="#3f6e4a" stroke-width="1.5" />
<text x="1434.34" y="240" font-family="&quot;Liberation Sans&quot;, sans-serif" font-size="24" font-weight="normal" fill="#6e7174" textLength="12.82" lengthAdjust="spacingAndGlyphs" >2</text>
<path d="M 1470 233.5 L 1478 225 L 1486 233.5" fill="none" stroke="#afb1b3" stroke-width="2.5" />
<path d="M 1512 226.5 L 1520 235 L 1528 226.5" fill="none" stroke="#afb1b3" stroke-width="2.5" />
<rect x="1523.5" y="260" width="15.5" height="460" fill="#46484a" rx="7.5" />
<rect x="1516" y="284" width="28" height="4" fill="#be9117" />
<rect x="1516" y="418" width="28" height="4" fill="#be9117" />
<rect x="1516" y="464" width="28" height="4" fill="#be9117" />
<rect x="1516" y="791" width="28" height="4" fill="#be9117" />
<rect x="1516" y="910" width="28" height="4" fill="#be9117" />
<rect x="1516" y="924" width="28" height="4" fill="#be9117" />
<rect x="1516" y="968" width="28" height="4" fill="#be9117" />
<rect x="1516" y="1058" width="28" height="4" fill="#be9117" />
<rect x="1516" y="1148" width="28" height="4" fill="#be9117" />
<rect x="1516" y="1222" width="28" height="4" fill="#be9117" />
<rect x="1516" y="1340" width="28" height="4" fill="#be9117" />
<rect x="1516" y="1384" width="28" height="4" fill="#be9117" />
<rect x="1516" y="1430" width="28" height="4" fill="#be9117" />
<rect x="1544.6" y="149.5" width="2" height="1445" fill="#2b2b2b" />
<text x="1556.72" y="187" font-family="&quot;Liberation Sans&quot;, sans-serif" font-size="27" font-weight="normal" fill="#bbbbbb" textLength="172.81" lengthAdjust="spacingAndGlyphs" >Fast Request:</text>
<path d="M 1768 166 L 1781 163 L 1790 166 L 1790 176 C 1790 183 1785 188 1780 191 C 1773 188 1768 183 1768 176 Z" fill="#afb1b3" />
<path d="M 1780 166 L 1780 190" fill="none" stroke="#3c3f41" stroke-width="2" />
<path d="M 1782 175 L 1798 184 L 1782 193 Z" fill="#3ba552" />
<text x="1804.41" y="187" font-family="&quot;Liberation Sans&quot;, sans-serif" font-size="27" font-weight="normal" fill="#bbbbbb" textLength="103.79" lengthAdjust="spacingAndGlyphs" >Request</text>
<rect x="1742" y="198" width="190" height="5" fill="#7a7d80" />
<rect x="1958" y="167" width="3.5" height="19" fill="#9a9c9e" />
<rect x="1965" y="165" width="3.5" height="21" fill="#5a9a55" />
<rect x="1972" y="162" width="3.5" height="24" fill="#9a9c9e" />
<rect x="1979" y="165" width="3.5" height="21" fill="#3f8fc0" />
<rect x="1985" y="168" width="3.5" height="18" fill="#9a9c9e" />
<text x="1996.95" y="187" font-family="&quot;Liberation Sans&quot;, sans-serif" font-size="27" font-weight="normal" fill="#bbbbbb" textLength="54.48" lengthAdjust="spacingAndGlyphs" >APIs</text>
<circle cx="2116" cy="176" r="11.5" fill="none" stroke="#6d7073" stroke-width="4"/>
<circle cx="2116" cy="176" r="5" fill="#3592c4" />
<text x="2138.27" y="187" font-family="&quot;Liberation Sans&quot;, sans-serif" font-size="27" font-weight="normal" fill="#bbbbbb" textLength="111.99" lengthAdjust="spacingAndGlyphs" >Navigate</text>
<path d="M 2808.26 173.56 L 2808.50 176.00 L 2804.83 177.76 L 2804.31 179.44 L 2806.39 182.94 L 2804.84 184.84 L 2801.00 183.48 L 2799.44 184.31 L 2798.44 188.26 L 2796.00 188.50 L 2794.24 184.83 L 2792.56 184.31 L 2789.06 186.39 L 2787.16 184.84 L 2788.52 181.00 L 2787.69 179.44 L 2783.74 178.44 L 2783.50 176.00 L 2787.17 174.24 L 2787.69 172.56 L 2785.61 169.06 L 2787.16 167.16 L 2791.00 168.52 L 2792.56 167.69 L 2793.56 163.74 L 2796.00 163.50 L 2797.76 167.17 L 2799.44 167.69 L 2802.94 165.61 L 2804.84 167.16 L 2803.48 171.00 L 2804.31 172.56 Z" fill="#afb1b3" />
<circle cx="2796" cy="176" r="4.125" fill="#3c3f41" />
<rect x="2836" y="174" width="24" height="4" fill="#afb1b3" />
<rect x="1546.5" y="202" width="1326.5" height="1.5" fill="#323232" />
<circle cx="1570" cy="225" r="9" fill="none" stroke="#afb1b3" stroke-width="3.8"/>
<line x1="1577" y1="232" x2="1586" y2="241" stroke="#afb1b3" stroke-width="4.2" />
<rect x="1610" y="213.5" width="28" height="12.5" fill="#595c5f" rx="6.25" />
<circle cx="1617" cy="219.75" r="4.5" fill="#00c4a7" />
<rect x="1610" y="229.5" width="28" height="13.5" fill="#00c4a7" rx="6.75" />
<circle cx="1631" cy="236.25" r="4.5" fill="#595c5f" />
<rect x="1663.5" y="215.5" width="25" height="25" fill="none" stroke="#ff8c00" stroke-width="3"/>
<line x1="1671" y1="218" x2="1671" y2="238" stroke="#ff8c00" stroke-width="2.5" />
<line x1="1681" y1="218" x2="1681" y2="238" stroke="#ff8c00" stroke-width="2.5" />
<circle cx="1671" cy="231" r="3" fill="#3c3f41" stroke="#ff8c00" stroke-width="2.5"/>
<circle cx="1681" cy="224.5" r="3" fill="#3c3f41" stroke="#ff8c00" stroke-width="2.5"/>
<circle cx="1728" cy="228" r="12" fill="none" stroke="#afb1b3" stroke-width="3.8"/>
<circle cx="1728" cy="228" r="5.2" fill="#3592c4" />
<rect x="1760.5" y="208" width="1.5" height="40" fill="#535658" />
<path d="M 1804 214 L 1776 230 L 1784 233 L 1786 242 L 1791 236 L 1800 239 Z" fill="#0f9d2f" />
<path d="M 1804 214 L 1786 233 L 1786 242" fill="none" stroke="#0a7a22" stroke-width="1" />
<path d="M 1820 225.5 L 1836 225.5 L 1828 233.5 Z" fill="#afb1b3" />
<rect x="1858" y="218" width="20" height="20" fill="#4f5254" />
<path d="M 1904 216 L 1928 216 L 1928 240 L 1904 240 Z" fill="#afb1b3" />
<rect x="1909" y="220" width="14" height="7" fill="#3c3f41" />
<rect x="1911" y="233" width="10" height="7" fill="#3c3f41" />
<rect x="1913" y="235" width="6" height="5" fill="#afb1b3" />
<path d="M 1946 225.5 L 1962 225.5 L 1954 233.5 Z" fill="#afb1b3" />
<path d="M 1983 231 C 1986 223 1998 220 2005 226" fill="none" stroke="#afb1b3" stroke-width="3.5" />
<path d="M 2008 219 L 2008 232 L 1996 232 Z" fill="#afb1b3" />
<rect x="2026.5" y="208" width="1.5" height="40" fill="#535658" />
<path d="M 2050 219 L 2050 238 L 2068 238" fill="none" stroke="#afb1b3" stroke-width="4" />
<path d="M 2071 217 L 2056 232 M 2055 222 L 2055 233 L 2066 233" fill="none" stroke="#afb1b3" stroke-width="4" />
<path d="M 2104 226 L 2098 232 C 2094 236 2096 241 2100 241 C 2103 241 2105 240 2107 238 L 2111 234" fill="none" stroke="#f4a70b" stroke-width="3.5" />
<path d="M 2111 229 L 2117 223 C 2121 219 2119 214 2115 214 C 2112 214 2110 215 2108 217 L 2104 221" fill="none" stroke="#f4a70b" stroke-width="3.5" />
<line x1="2103" y1="235" x2="2112" y2="226" stroke="#f4a70b" stroke-width="3.5" />
<path d="M 2138 225.5 L 2154 225.5 L 2146 233.5 Z" fill="#afb1b3" />
<path d="M 2175 215 L 2197 215 M 2175 241 L 2197 241 M 2178 216 L 2194 240 M 2194 216 L 2178 240" fill="none" stroke="#f55b45" stroke-width="3" />
<path d="M 2180 219 L 2192 219 L 2186 228 Z M 2186 233 L 2193 240 L 2179 240 Z" fill="#f55b45" />
<circle cx="2244" cy="218" r="4.8" fill="#f9976a" />
<circle cx="2223" cy="228.5" r="4.8" fill="#f9976a" />
<circle cx="2244" cy="239.5" r="4.8" fill="#f9976a" />
<path d="M 2244 218 L 2223 228.5 L 2244 239.5" fill="none" stroke="#f9976a" stroke-width="3" />
<path d="M 2264 225.5 L 2280 225.5 L 2272 233.5 Z" fill="#afb1b3" />
<rect x="2292.5" y="208" width="1.5" height="40" fill="#535658" />
<path d="M 2322 214 L 2336 222 L 2322 230 L 2308 222 Z" fill="#1fbf50" />
<path d="M 2309 228 L 2322 236 L 2335 228" fill="none" stroke="#1fbf50" stroke-width="3" />
<path d="M 2309 234 L 2322 242 L 2335 234" fill="none" stroke="#1fbf50" stroke-width="3" />
<path d="M 2352 225.5 L 2368 225.5 L 2360 234 Z" fill="#afb1b3" />
<rect x="2381" y="208" width="1.5" height="40" fill="#535658" />
<path d="M 2402 238 L 2415 225" fill="none" stroke="#afb1b3" stroke-width="6" />
<circle cx="2420" cy="222" r="7" fill="none" stroke="#afb1b3" stroke-width="5"/>
<path d="M 2420 222 L 2429 213 L 2431 220 Z" fill="#3c3f41" />
<path d="M 2459 224 C 2459 218 2463 215.5 2466 215.5 C 2470 215.5 2474 218 2474 223 C 2474 228 2467 229 2467 234" fill="none" stroke="#afb1b3" stroke-width="3.8" />
<rect x="2464.5" y="236" width="5" height="4.5" fill="#afb1b3" />
<path d="M 2531.80 228.00 L 2531.04 229.72 L 2529.45 231.07 L 2528.35 232.29 L 2528.26 233.93 L 2528.43 236.01 L 2527.76 237.76 L 2526.01 238.43 L 2523.93 238.26 L 2522.29 238.35 L 2521.07 239.45 L 2519.72 241.04 L 2518.00 241.80 L 2516.28 241.04 L 2514.93 239.45 L 2513.71 238.35 L 2512.07 238.26 L 2509.99 238.43 L 2508.24 237.76 L 2507.57 236.01 L 2507.74 233.93 L 2507.65 232.29 L 2506.55 231.07 L 2504.96 229.72 L 2504.20 228.00 L 2504.96 226.28 L 2506.55 224.93 L 2507.65 223.71 L 2507.74 222.08 L 2507.57 219.99 L 2508.24 218.24 L 2509.99 217.57 L 2512.07 217.74 L 2513.71 217.65 L 2514.93 216.55 L 2516.28 214.96 L 2518.00 214.20 L 2519.72 214.96 L 2521.07 216.55 L 2522.29 217.65 L 2523.93 217.74 L 2526.01 217.57 L 2527.76 218.24 L 2528.43 219.99 L 2528.26 222.07 L 2528.35 223.71 L 2529.45 224.93 L 2531.04 226.28 Z" fill="none" stroke="#1ed8a0" stroke-width="1.8" />
<path d="M 2511 228 L 2516 233 L 2526 222" fill="none" stroke="#1ed8a0" stroke-width="1.8" />
<rect x="1546.5" y="252" width="1326.5" height="2" fill="#323232" />
<rect x="1553" y="263" width="671" height="50" rx="6" fill="none" stroke="#646667" stroke-width="2"/>
<circle cx="1580" cy="288" r="14" fill="#8f74bf" />
<text x="1580" y="296.5" font-family="&quot;Liberation Sans&quot;, sans-serif" font-size="22" font-weight="normal" font-style="normal" fill="#2b2b2b" xml:space="preserve" text-anchor="middle">p</text>
<text x="1601.49" y="298" font-family="&quot;Liberation Sans&quot;, sans-serif" font-size="27" font-weight="normal" fill="#bbbbbb" textLength="55.34" lengthAdjust="spacingAndGlyphs" >card</text>
<path d="M 2192 285 L 2210 285 L 2201 294.5 Z" fill="#9a9c9e" />
<rect x="2239" y="263" width="627" height="49" rx="6" fill="none" stroke="#646667" stroke-width="2"/>
<circle cx="2266" cy="288" r="14" fill="#3b87a8" />
<text x="2266" y="296" font-family="&quot;Liberation Sans&quot;, sans-serif" font-size="19" font-weight="normal" font-style="normal" fill="#2b4a5a" xml:space="preserve" text-anchor="middle">E</text>
<text x="2287.02" y="297.6" font-family="&quot;Liberation Sans&quot;, sans-serif" font-size="27" font-weight="normal" fill="#bbbbbb" textLength="60.55" lengthAdjust="spacingAndGlyphs" >local</text>
<path d="M 2836 284 L 2854 284 L 2845 294 Z" fill="#9a9c9e" />
<rect x="1553" y="337" width="196" height="46" rx="6" fill="none" stroke="#646667" stroke-width="2"/>
<rect x="1554" y="338" width="152" height="44" fill="#4382ba" />
<path d="M 1554 344 Q 1554 338 1560 338 L 1706 338 L 1706 382 L 1560 382 Q 1554 382 1554 376 Z" fill="#4382ba"/>
<text x="1563.74" y="370" font-family="&quot;Liberation Sans&quot;, sans-serif" font-size="25" font-weight="normal" fill="#c8c8c8" textLength="51.43" lengthAdjust="spacingAndGlyphs" >GET</text>
<path d="M 1718 356 L 1736 356 L 1727 366 Z" fill="#9a9c9e" />
<rect x="1763" y="337" width="935" height="46" fill="#45494a" stroke="#5e6163" stroke-width="2"/>
<text x="1774.00" y="370" font-family="&quot;Liberation Sans&quot;, sans-serif" font-size="27" font-weight="normal" fill="#bbbbbb" textLength="251.94" lengthAdjust="spacingAndGlyphs" >/book/queryByName</text>
<rect x="2714" y="338" width="152" height="45" rx="6" fill="none" stroke="#646667" stroke-width="2"/>
<text x="2723.82" y="369.8" font-family="&quot;Liberation Sans&quot;, sans-serif" font-size="25" font-weight="normal" fill="#6e7072" textLength="16.87" lengthAdjust="spacingAndGlyphs" >0</text>
<path d="M 2836 356 L 2854 356 L 2845 366 Z" fill="#5e6062" />
<text x="1574.92" y="439.5" font-family="&quot;Liberation Sans&quot;, sans-serif" font-size="24" font-weight="normal" fill="#bbbbbb" textLength="95.69" lengthAdjust="spacingAndGlyphs" >Headers</text>
<text x="1729.01" y="439.5" font-family="&quot;Liberation Sans&quot;, sans-serif" font-size="24" font-weight="normal" fill="#bbbbbb" textLength="128.40" lengthAdjust="spacingAndGlyphs" >Path Param</text>
<text x="1917.16" y="439.5" font-family="&quot;Liberation Sans&quot;, sans-serif" font-size="24" font-weight="normal" fill="#bbbbbb" textLength="136.71" lengthAdjust="spacingAndGlyphs" >URL Params</text>
<text x="2112.29" y="439.5" font-family="&quot;Liberation Sans&quot;, sans-serif" font-size="24" font-weight="normal" fill="#bbbbbb" textLength="58.77" lengthAdjust="spacingAndGlyphs" >Body</text>
<text x="2230.80" y="439.5" font-family="&quot;Liberation Sans&quot;, sans-serif" font-size="24" font-weight="normal" fill="#bbbbbb" textLength="67.29" lengthAdjust="spacingAndGlyphs" >Script</text>
<text x="2356.77" y="439.5" font-family="&quot;Liberation Sans&quot;, sans-serif" font-size="24" font-weight="normal" fill="#4ebd5c" textLength="133.84" lengthAdjust="spacingAndGlyphs" >&gt; Response</text>
<text x="2549.32" y="439.5" font-family="&quot;Liberation Sans&quot;, sans-serif" font-size="24" font-weight="normal" fill="#c75450" textLength="92.81" lengthAdjust="spacingAndGlyphs" >Console</text>
<rect x="1546.5" y="464" width="1326.5" height="2" fill="#323232" />
<rect x="1888" y="459.5" width="196" height="6" fill="#4a88c7" />
<text x="1576.46" y="506" font-family="&quot;Liberation Sans&quot;, sans-serif" font-size="24" font-weight="normal" fill="#bbbbbb" textLength="59.59" lengthAdjust="spacingAndGlyphs" >Table</text>
<text x="1696.47" y="506" font-family="&quot;Liberation Sans&quot;, sans-serif" font-size="24" font-weight="normal" fill="#bbbbbb" textLength="45.70" lengthAdjust="spacingAndGlyphs" >Text</text>
<rect x="1546.5" y="531.5" width="1326.5" height="3" fill="#2e3032" />
<rect x="1546" y="526" width="120" height="6" fill="#4a88c7" />
<path d="M 1574 547 L 1574 568 M 1563.5 557.5 L 1584.5 557.5" fill="none" stroke="#c0c0c0" stroke-width="3.2" />
<rect x="1616" y="556" width="20" height="3" fill="#5c5f61" />
<path d="M 1667 552 C 1672 543 1687 543 1692 552 C 1687 561 1672 561 1667 552 Z" fill="#5c5f61" />
<circle cx="1679.5" cy="552" r="4" fill="#3c3f41" />
<rect x="1685" y="557" width="15" height="14" fill="#5c5f61" />
<rect x="1688" y="561" width="9" height="1.8" fill="#3c3f41" />
<rect x="1688" y="565" width="9" height="1.8" fill="#3c3f41" />
<rect x="1546.5" y="581.5" width="1326.5" height="2" fill="#2e3032" />
<rect x="1548" y="584" width="1324" height="48" fill="#45494a" />
<rect x="1548" y="584" width="58" height="48" fill="#3c3f41" />
<rect x="1606.5" y="586" width="2" height="44" fill="#323436" />
<rect x="1740.5" y="586" width="2" height="44" fill="#323436" />
<rect x="2056.5" y="586" width="2" height="44" fill="#323436" />
<rect x="2495.5" y="586" width="2" height="44" fill="#323436" />
<rect x="1555" y="595" width="26" height="26" rx="4" fill="#43474a" stroke="#6b6e70" stroke-width="2"/>
<path d="M 1560 608 L 1565.5 614 L 1576 600" fill="none" stroke="#b4b6b8" stroke-width="3.8" />
<text x="1622.51" y="616" font-family="&quot;Liberation Sans&quot;, sans-serif" font-size="22" font-weight="normal" fill="#bbbbbb" textLength="48.46" lengthAdjust="spacingAndGlyphs" >Type</text>
<text x="1755.25" y="616" font-family="&quot;Liberation Sans&quot;, sans-serif" font-size="22" font-weight="normal" fill="#bbbbbb" textLength="36.79" lengthAdjust="spacingAndGlyphs" >Key</text>
<text x="2072.91" y="616" font-family="&quot;Liberation Sans&quot;, sans-serif" font-size="22" font-weight="normal" fill="#bbbbbb" textLength="55.05" lengthAdjust="spacingAndGlyphs" >Value</text>
<text x="2511.07" y="616" font-family="&quot;Liberation Sans&quot;, sans-serif" font-size="22" font-weight="normal" fill="#bbbbbb" textLength="117.45" lengthAdjust="spacingAndGlyphs" >Description</text>
<rect x="1548" y="631.5" width="1324" height="2.5" fill="#2f3133" />
<clipPath id="rowclip"><rect x="1548" y="634" width="1324" height="28"/></clipPath>
<g clip-path="url(#rowclip)">
<rect x="1555" y="639" width="26" height="26" rx="4" fill="#43474a" stroke="#6b6e70" stroke-width="2"/>
<path d="M 1560 652 L 1565.5 658 L 1576 644" fill="none" stroke="#b4b6b8" stroke-width="3.8" />
<rect x="1628" y="640" width="24" height="30" fill="#a3a5a7" />
<text x="1640" y="660" font-family="&quot;Liberation Sans&quot;, sans-serif" font-size="20" font-weight="bold" font-style="normal" fill="#3c3f41" xml:space="preserve" text-anchor="middle">A</text>
<path d="M 1700 650 L 1718 650 L 1709 659.5 Z" fill="#a3a5a7" />
<text x="1751.20" y="663.5" font-family="&quot;Liberation Sans&quot;, sans-serif" font-size="27" font-weight="normal" fill="#bbbbbb" textLength="135.04" lengthAdjust="spacingAndGlyphs" >bookName</text>
<text x="2061.81" y="663.5" font-family="&quot;Liberation Sans&quot;, sans-serif" font-size="27" font-weight="normal" fill="#bbbbbb" textLength="220.99" lengthAdjust="spacingAndGlyphs" >bookName_nar82</text>
</g>
<rect x="1605" y="634" width="2" height="40" fill="#45484a" />
<rect x="1738.5" y="634" width="2" height="40" fill="#45484a" />
<rect x="2054.5" y="634" width="2" height="40" fill="#45484a" />
<rect x="2495" y="634" width="2" height="39" fill="#4b4e50" />
<rect x="2869" y="634" width="2" height="39" fill="#4b4e50" />
<text x="2501.57" y="662" font-family="&quot;Liberation Sans&quot;, sans-serif" font-size="27" font-weight="normal" fill="#bbbbbb" textLength="159.89" lengthAdjust="spacingAndGlyphs" >book's name</text>
<rect x="1548" y="672" width="1324" height="2" fill="#4b4e50" />
<rect x="2872.2" y="149.5" width="3.8" height="1445" fill="#2e3032" />
<rect x="2876" y="288" width="40" height="212" fill="#2d2f30" />
<text x="2881" y="189" font-family="&quot;Liberation Sans&quot;, sans-serif" font-size="30" font-weight="bold" font-style="italic" fill="#afb1b3" xml:space="preserve" >m</text>
<text transform="rotate(90)" x="201.77" y="-2887.5" font-family="&quot;Liberation Sans&quot;, sans-serif" font-size="23" font-weight="normal" fill="#bbbbbb" textLength="66.98" lengthAdjust="spacingAndGlyphs" >Maven</text>
<path d="M 2885 336 L 2885 322 C 2885 316 2889 314 2893 314 C 2896 314 2898 316 2899 318 L 2896 323 C 2895 321 2894 321 2892 321 C 2891 321 2890 322 2890 324 L 2890 336 Z" fill="#f08c00" />
<path d="M 2896 328 L 2902 318 M 2899 336 L 2906 326 L 2906 336 Z" fill="#f08c00" stroke="#f08c00" stroke-width="2.5" />
<text transform="rotate(90)" x="344.66" y="-2887.5" font-family="&quot;Liberation Sans&quot;, sans-serif" font-size="23" font-weight="normal" fill="#e6e6e6" textLength="133.20" lengthAdjust="spacingAndGlyphs" stroke="#e6e6e6" stroke-width="0.7">Fast Request</text>
<rect x="36" y="1594" width="2880" height="1.5" fill="#323232" />
<rect x="36" y="1636.5" width="2880" height="1.5" fill="#46453f" />
<text x="126.85" y="1624" font-family="&quot;Liberation Sans&quot;, sans-serif" font-size="23" font-weight="normal" fill="#bbbbbb" textLength="29.32" lengthAdjust="spacingAndGlyphs" >Git</text>
<text x="229.51" y="1624" font-family="&quot;Liberation Sans&quot;, sans-serif" font-size="23" font-weight="normal" fill="#bbbbbb" textLength="62.52" lengthAdjust="spacingAndGlyphs" >TODO</text>
<text x="364.93" y="1624" font-family="&quot;Liberation Sans&quot;, sans-serif" font-size="23" font-weight="normal" fill="#bbbbbb" textLength="96.19" lengthAdjust="spacingAndGlyphs" >Problems</text>
<text x="537.50" y="1624" font-family="&quot;Liberation Sans&quot;, sans-serif" font-size="23" font-weight="normal" fill="#bbbbbb" textLength="85.98" lengthAdjust="spacingAndGlyphs" >Terminal</text>
<text x="696.06" y="1624" font-family="&quot;Liberation Sans&quot;, sans-serif" font-size="23" font-weight="normal" fill="#bbbbbb" textLength="52.46" lengthAdjust="spacingAndGlyphs" >Build</text>
<text x="822.10" y="1624" font-family="&quot;Liberation Sans&quot;, sans-serif" font-size="23" font-weight="normal" fill="#bbbbbb" textLength="147.73" lengthAdjust="spacingAndGlyphs" >Dependencies</text>
<circle cx="102" cy="1608.7" r="3.5" fill="#afb1b3" />
<circle cx="102" cy="1625.7" r="3.5" fill="#afb1b3" />
<circle cx="112.1" cy="1612.3" r="3.5" fill="#afb1b3" />
<path d="M 102 1608.7 L 102 1625.7 M 112.1 1612.3 L 112.1 1615.3 C 112.1 1618.2 108.1 1619.2 102 1620.2" fill="none" stroke="#afb1b3" stroke-width="3.3" />
<rect x="200" y="1608.2" width="4" height="3.6" fill="#afb1b3" />
<rect x="206" y="1608.2" width="14" height="3.6" fill="#afb1b3" />
<rect x="200" y="1614.6" width="4" height="3.6" fill="#afb1b3" />
<rect x="206" y="1614.6" width="14" height="3.6" fill="#afb1b3" />
<rect x="200" y="1621.2" width="4" height="3.6" fill="#afb1b3" />
<rect x="206" y="1621.2" width="14" height="3.6" fill="#afb1b3" />
<circle cx="345" cy="1617.5" r="10.5" fill="#afb1b3" />
<rect x="343.5" y="1610" width="3.5" height="9" fill="#3c3f41" />
<rect x="343.5" y="1621" width="3.5" height="3.5" fill="#3c3f41" />
<rect x="505" y="1607" width="22" height="21" fill="#afb1b3" />
<path d="M 509 1612 L 514 1617 L 509 1622" fill="none" stroke="#3c3f41" stroke-width="2.2" />
<rect x="516" y="1621" width="7" height="2" fill="#3c3f41" />
<path d="M 664 1614 L 673 1606 L 680 1611 L 676 1615 L 688 1628 L 684 1632 L 672 1619 L 668 1622 Z" fill="#afb1b3" />
<path d="M 802 1607 L 813 1613 L 802 1619 L 791 1613 Z" fill="#afb1b3" />
<path d="M 791 1618 L 802 1624 L 813 1618 M 791 1623 L 802 1629 L 813 1623" fill="none" stroke="#afb1b3" stroke-width="2.5" />
<path d="M 2745.5 1632 L 2734 1632 C 2726 1632 2721 1626 2721 1619 C 2721 1612 2727 1606 2733 1606 C 2740 1606 2745.5 1612 2745.5 1619 Z" fill="none" stroke="#afb1b3" stroke-width="2.5" />
<text x="2753.15" y="1624.5" font-family="&quot;Liberation Sans&quot;, sans-serif" font-size="23" font-weight="normal" fill="#bbbbbb" textLength="101.29" lengthAdjust="spacingAndGlyphs" >Event Log</text>
<rect x="53.3" y="1647" width="17.5" height="17.6" fill="none" stroke="#c4c4c4" stroke-width="2"/>
<path d="M 49.2 1650 L 49.2 1668.7 L 68 1668.7" fill="none" stroke="#c4c4c4" stroke-width="2" />
<text x="2410.86" y="1666" font-family="&quot;Liberation Sans&quot;, sans-serif" font-size="23" font-weight="normal" fill="#bbbbbb" textLength="53.98" lengthAdjust="spacingAndGlyphs" >19:17</text>
<text x="2486.92" y="1666" font-family="&quot;Liberation Sans&quot;, sans-serif" font-size="23" font-weight="normal" fill="#bbbbbb" textLength="25.97" lengthAdjust="spacingAndGlyphs" >LF</text>
<text x="2534.16" y="1666" font-family="&quot;Liberation Sans&quot;, sans-serif" font-size="23" font-weight="normal" fill="#bbbbbb" textLength="67.63" lengthAdjust="spacingAndGlyphs" >UTF-8</text>
<text x="2625.47" y="1666" font-family="&quot;Liberation Sans&quot;, sans-serif" font-size="23" font-weight="normal" fill="#bbbbbb" textLength="92.87" lengthAdjust="spacingAndGlyphs" >4 spaces</text>
<text x="2774.46" y="1666" font-family="&quot;Liberation Sans&quot;, sans-serif" font-size="23" font-weight="normal" fill="#bbbbbb" textLength="70.93" lengthAdjust="spacingAndGlyphs" >master</text>
<circle cx="2750.2" cy="1647.4" r="3.5" fill="#afb1b3" />
<circle cx="2750.2" cy="1668.7" r="3.5" fill="#afb1b3" />
<circle cx="2761.6" cy="1649.8" r="3.5" fill="#afb1b3" />
<path d="M 2750.2 1647.4 L 2750.2 1668.7 M 2761.6 1649.8 L 2761.6 1652.8 C 2761.6 1659.0500000000002 2757.6 1660.0500000000002 2750.2 1661.0500000000002" fill="none" stroke="#afb1b3" stroke-width="3.3" />
<path d="M 2867.2 1656 L 2867.2 1652 C 2867.2 1648 2869.5 1646.5 2872.2 1646.5 C 2875 1646.5 2877.2 1648 2877.2 1652 L 2877.2 1657" fill="none" stroke="#afb1b3" stroke-width="2.6" />
<rect x="2872" y="1656" width="15.5" height="12" fill="#afb1b3" />
<rect x="587" y="646" width="197.6" height="48.3" rx="13" fill="none" stroke="#ff2600" stroke-width="8"/>
<path d="M 830 666.5 L 2491 658.8 L 2491 668.7 L 830 676.5 Z" fill="#ff2600" />
<path d="M 807 671.7 L 834 656.4 L 834 686.9 Z" fill="#ff2600" /></svg>
</body></html>
